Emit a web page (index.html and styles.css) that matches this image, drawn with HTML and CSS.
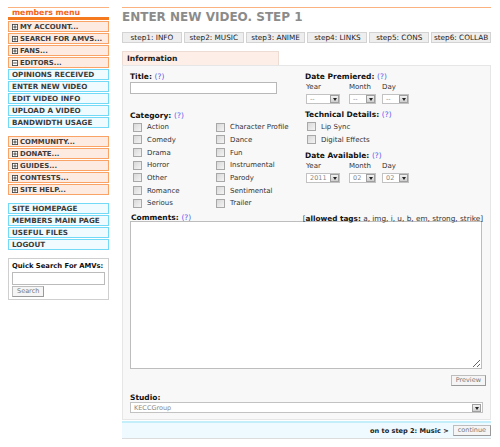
FILE: index.html
```html
<!DOCTYPE html>
<html lang="en">
<head>
  <meta charset="utf-8" />
  <title>Enter New Video. Step 1</title>
  <link rel="stylesheet" href="styles.css">
</head>
<body>
<div class="page">
  <div class="sidebar">
    <div class="menu-head">members menu</div>
    <div class="group">
      <a class="item sub" href="#"><svg class="tog" viewBox="0 0 7 7"><rect x="0.5" y="0.5" width="6" height="6" fill="#fff" stroke="#444"/><path d="M1.5 3.5h4M3.5 1.5v4" stroke="#333"/></svg>MY ACCOUNT...</a>
      <a class="item sub" href="#"><svg class="tog" viewBox="0 0 7 7"><rect x="0.5" y="0.5" width="6" height="6" fill="#fff" stroke="#444"/><path d="M1.5 3.5h4M3.5 1.5v4" stroke="#333"/></svg>SEARCH FOR AMVS...</a>
      <a class="item sub" href="#"><svg class="tog" viewBox="0 0 7 7"><rect x="0.5" y="0.5" width="6" height="6" fill="#fff" stroke="#444"/><path d="M1.5 3.5h4M3.5 1.5v4" stroke="#333"/></svg>FANS...</a>
      <a class="item sub" href="#"><svg class="tog" viewBox="0 0 7 7"><rect x="0.5" y="0.5" width="6" height="6" fill="#fff" stroke="#444"/><path d="M1.5 3.5h4" stroke="#333"/></svg>EDITORS...</a>
      <a class="item link" href="#">OPINIONS RECEIVED</a>
      <a class="item link" href="#">ENTER NEW VIDEO</a>
      <a class="item link" href="#">EDIT VIDEO INFO</a>
      <a class="item link" href="#">UPLOAD A VIDEO</a>
      <a class="item link" href="#">BANDWIDTH USAGE</a>
    </div>
    <div class="group">
      <a class="item sub" href="#"><svg class="tog" viewBox="0 0 7 7"><rect x="0.5" y="0.5" width="6" height="6" fill="#fff" stroke="#444"/><path d="M1.5 3.5h4M3.5 1.5v4" stroke="#333"/></svg>COMMUNITY...</a>
      <a class="item sub" href="#"><svg class="tog" viewBox="0 0 7 7"><rect x="0.5" y="0.5" width="6" height="6" fill="#fff" stroke="#444"/><path d="M1.5 3.5h4M3.5 1.5v4" stroke="#333"/></svg>DONATE...</a>
      <a class="item sub" href="#"><svg class="tog" viewBox="0 0 7 7"><rect x="0.5" y="0.5" width="6" height="6" fill="#fff" stroke="#444"/><path d="M1.5 3.5h4M3.5 1.5v4" stroke="#333"/></svg>GUIDES...</a>
      <a class="item sub" href="#"><svg class="tog" viewBox="0 0 7 7"><rect x="0.5" y="0.5" width="6" height="6" fill="#fff" stroke="#444"/><path d="M1.5 3.5h4M3.5 1.5v4" stroke="#333"/></svg>CONTESTS...</a>
      <a class="item sub" href="#"><svg class="tog" viewBox="0 0 7 7"><rect x="0.5" y="0.5" width="6" height="6" fill="#fff" stroke="#444"/><path d="M1.5 3.5h4M3.5 1.5v4" stroke="#333"/></svg>SITE HELP...</a>
    </div>
    <div class="group">
      <a class="item link" href="#">SITE HOMEPAGE</a>
      <a class="item link" href="#">MEMBERS MAIN PAGE</a>
      <a class="item link" href="#">USEFUL FILES</a>
      <a class="item link" href="#">LOGOUT</a>
    </div>
    <div class="quick">
      <div class="quick-title">Quick Search For AMVs:</div>
      <input type="text" class="quick-input">
      <button class="btn quick-btn">Search</button>
    </div>
  </div>

  <div class="main">
    <h1 class="title">ENTER NEW VIDEO. STEP 1</h1>
    <div class="steps">
      <span class="step">step1: INFO</span>
      <span class="step">step2: MUSIC</span>
      <span class="step">step3: ANIME</span>
      <span class="step">step4: LINKS</span>
      <span class="step">step5: CONS</span>
      <span class="step">step6: COLLAB</span>
    </div>

    <div class="tab">Information</div>
    <div class="panel">
      <div class="form-top">
        <div class="col-left">
          <div class="lbl">Title: <a class="help" href="#">(?)</a></div>
          <input type="text" class="title-input">

          <div class="lbl cat-lbl">Category: <a class="help" href="#">(?)</a></div>
          <div class="cats">
            <label class="chk"><span class="cb"></span>Action</label>
            <label class="chk"><span class="cb"></span>Character Profile</label>
            <label class="chk"><span class="cb"></span>Comedy</label>
            <label class="chk"><span class="cb"></span>Dance</label>
            <label class="chk"><span class="cb"></span>Drama</label>
            <label class="chk"><span class="cb"></span>Fun</label>
            <label class="chk"><span class="cb"></span>Horror</label>
            <label class="chk"><span class="cb"></span>Instrumental</label>
            <label class="chk"><span class="cb"></span>Other</label>
            <label class="chk"><span class="cb"></span>Parody</label>
            <label class="chk"><span class="cb"></span>Romance</label>
            <label class="chk"><span class="cb"></span>Sentimental</label>
            <label class="chk"><span class="cb"></span>Serious</label>
            <label class="chk"><span class="cb"></span>Trailer</label>
          </div>
        </div>

        <div class="col-right">
          <div class="lbl">Date Premiered: <a class="help" href="#">(?)</a></div>
          <div class="dates">
            <span class="dl">Year</span><span class="dl">Month</span><span class="dl">Day</span>
            <span class="sel w-year"><span class="val">--</span><span class="arrow"></span></span>
            <span class="sel w-md"><span class="val">--</span><span class="arrow"></span></span>
            <span class="sel w-md"><span class="val">--</span><span class="arrow"></span></span>
          </div>

          <div class="lbl tech-lbl">Technical Details: <a class="help" href="#">(?)</a></div>
          <label class="chk tech"><span class="cb"></span>Lip Sync</label>
          <label class="chk tech"><span class="cb"></span>Digital Effects</label>

          <div class="lbl avail-lbl">Date Available: <a class="help" href="#">(?)</a></div>
          <div class="dates">
            <span class="dl">Year</span><span class="dl">Month</span><span class="dl">Day</span>
            <span class="sel w-year"><span class="val">2011</span><span class="arrow"></span></span>
            <span class="sel w-md"><span class="val">02</span><span class="arrow"></span></span>
            <span class="sel w-md"><span class="val">02</span><span class="arrow"></span></span>
          </div>
        </div>
      </div>

      <div class="comments-head">
        <span class="lbl">Comments: <a class="help" href="#">(?)</a></span>
        <span class="tags">[<b>allowed tags:</b> a, img, i, u, b, em, strong, strike]</span>
      </div>
      <textarea class="comments"></textarea>
      <div class="preview-row"><button class="btn">Preview</button></div>

      <div class="lbl studio-lbl">Studio:</div>
      <span class="sel studio"><span class="val">KECCGroup</span><span class="arrow"></span></span>
    </div>

    <div class="next-bar">
      <b>on to step 2: Music &gt;</b>
      <button class="btn">continue</button>
    </div>
  </div>
</div>
</body>
</html>
```

FILE: styles.css
```css
/* base */
body {
  margin: 0;
  background: #fff;
  color: #222;
  font-family: "DejaVu Sans", Verdana, sans-serif;
  font-size: 7px;
}
a {
  text-decoration: none;
}
.page {
  display: flex;
  align-items: flex-start;
  padding: 7px 0 0 8px;
}

/* left menu */
.sidebar {
  width: 101px;
  margin-right: 13px;
}
.menu-head {
  height: 9px;
  line-height: 9px;
  padding-left: 4px;
  border-top: 1px solid #fbb27e;
  border-bottom: 3px solid #f57a1f;
  margin-bottom: 1px;
  color: #f2651a;
  font-size: 7.8px;
  font-weight: bold;
}
.group {
  margin-bottom: 8px;
}
.item {
  display: flex;
  align-items: center;
  height: 9px;
  margin-bottom: 1px;
  padding-left: 3px;
  border: 1px solid;
  color: #3c3c3c;
  font-size: 7.2px;
  font-weight: bold;
  white-space: nowrap;
  overflow: hidden;
}
.item.sub {
  background: #fdeae0;
  border-color: #f9a466;
  font-size: 6.9px;
}
.item.link {
  background: #effbff;
  border-color: #72d9f6;
}
.tog {
  flex: none;
  width: 6px;
  height: 6px;
  margin-right: 2px;
}
.quick {
  border: 1px solid #cfcfcf;
  padding: 2px 3px 2px 3px;
}
.quick-title {
  font-size: 6.8px;
  font-weight: bold;
  color: #111;
  line-height: 10px;
  white-space: nowrap;
}
.quick-input {
  display: block;
  box-sizing: border-box;
  width: 93px;
  height: 13px;
  margin: 1px 0 1px 0;
  border: 1px solid #bbb;
  padding: 0;
}

/* buttons */
.btn {
  box-sizing: border-box;
  height: 11px;
  padding: 0 4px;
  border: 1px solid #bdbdbd;
  border-bottom-color: #9a9a9a;
  border-right-color: #9a9a9a;
  background: #f5f5f5;
  color: #777;
  font-family: inherit;
  font-size: 6.5px;
  line-height: 9px;
}

/* main column */
.main {
  width: 369px;
  border-top: 1px solid #fbb27e;
}
.title {
  margin: 2px 0 0 0;
  height: 14px;
  line-height: 14px;
  color: #8b8b8b;
  font-size: 12px;
  font-weight: bold;
}
.steps {
  display: flex;
  gap: 2px;
  margin-top: 8px;
}
.step {
  flex: 1;
  height: 9px;
  line-height: 9px;
  border: 1px solid #d3d3d3;
  background: #eeeeee;
  color: #222;
  font-size: 7.3px;
  text-align: center;
  white-space: nowrap;
}
.tab {
  width: 151px;
  height: 13px;
  line-height: 13px;
  margin-top: 8px;
  padding-left: 4px;
  border: 1px solid #ecdcd4;
  border-bottom: none;
  background: #fdeee7;
  font-size: 7.6px;
  font-weight: bold;
}
.panel {
  border: 1px solid #e6e6e6;
  background: #f8f8f8;
  padding: 6px 7px 6px 7px;
}

/* form */
.lbl {
  line-height: 10px;
  font-size: 7.5px;
  font-weight: bold;
  color: #111;
}
.help {
  color: #5b5bf0;
  font-weight: normal;
}
.form-top {
  display: grid;
  grid-template-columns: 175px 1fr;
}
.title-input {
  display: block;
  box-sizing: border-box;
  width: 147px;
  height: 12px;
  margin: 0;
  padding: 0;
  border: 1px solid #b8b8b8;
}
.cat-lbl {
  margin-top: 17px;
}
.cats {
  display: grid;
  grid-template-columns: 83px 1fr;
  grid-auto-rows: 12.65px;
}
.chk {
  display: flex;
  align-items: center;
  color: #333;
  white-space: nowrap;
}
.cb {
  box-sizing: border-box;
  width: 9px;
  height: 9px;
  margin: 0 5px 0 3px;
  border: 1px solid #a8a8a8;
  background: linear-gradient(135deg, #d8d8d8, #f4f4f4);
}
.tech {
  height: 13px;
}
.tech .cb {
  margin-left: 2px;
}
.tech-lbl {
  margin-top: 6px;
}
.avail-lbl {
  margin-top: 5px;
}
.dates {
  display: grid;
  grid-template-columns: 43px 33px auto;
  row-gap: 2px;
  padding-left: 1px;
}
.dl {
  line-height: 10px;
  color: #333;
}
.sel {
  box-sizing: border-box;
  display: flex;
  align-items: center;
  height: 10px;
  border: 1px solid #c2c2c2;
  background: #fff;
  color: #888;
  font-size: 6.5px;
}
.sel .val {
  flex: 1;
  padding-left: 3px;
}
.arrow {
  position: relative;
  width: 9px;
  height: 8px;
  border: 1px solid #9f9f9f;
  box-sizing: border-box;
  background: linear-gradient(#f2f2f2, #cfcfcf);
}
.arrow::after {
  content: "";
  position: absolute;
  left: 2px;
  top: 2px;
  border-left: 2px solid transparent;
  border-right: 2px solid transparent;
  border-top: 3px solid #222;
}
.w-year {
  width: 34px;
}
.w-md {
  width: 27px;
}
.comments-head {
  display: flex;
  justify-content: space-between;
  align-items: center;
  height: 6px;
  margin-top: 6px;
  padding-left: 1px;
}
.tags {
  color: #333;
  font-size: 7.3px;
}
.tags b {
  color: #111;
}
.comments {
  display: block;
  box-sizing: border-box;
  width: 352px;
  height: 148px;
  margin: 0;
  border: 1px solid #bdbdbd;
  background: #fff;
}
.preview-row {
  display: flex;
  justify-content: flex-end;
  margin: 6px -3px 0 0;
}
.studio-lbl {
  line-height: 8px;
  margin-top: 8px;
}
.studio {
  width: 353px;
  height: 11px;
}
.studio .arrow {
  margin-right: 1px;
}
.next-bar {
  display: flex;
  justify-content: flex-end;
  align-items: center;
  gap: 4px;
  height: 15px;
  margin-top: 1px;
  border-top: 2px solid #c5eefb;
  border-bottom: 1px solid #dcdcdc;
  background: #eefaff;
  color: #222;
  font-size: 6.6px;
}
```
